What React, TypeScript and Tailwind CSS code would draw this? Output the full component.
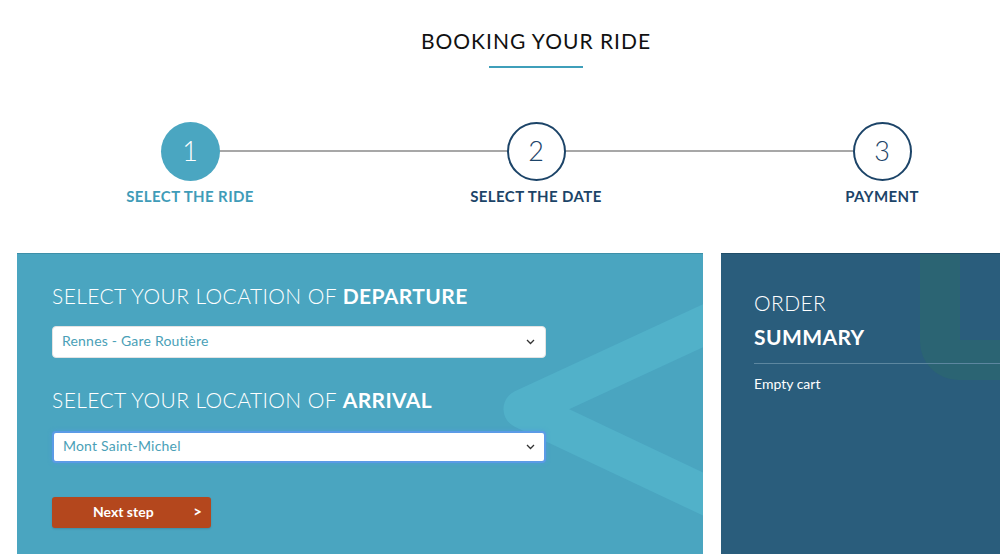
import React from "react";

const steps = [
  { n: 1, label: "SELECT THE RIDE", active: true },
  { n: 2, label: "SELECT THE DATE", active: false },
  { n: 3, label: "PAYMENT", active: false },
];

function Chevron() {
  return (
    <svg
      className="pointer-events-none absolute right-[11px] top-1/2 -translate-y-1/2"
      width="9"
      height="6"
      viewBox="0 0 9 6"
      fill="none"
    >
      <path d="M1 1l3.5 3.5L8 1" stroke="#333" strokeWidth="1.3" />
    </svg>
  );
}

function LocationSelect({ value, focused }: { value: string; focused?: boolean }) {
  return (
    <div className="relative w-[494px]">
      <select
        defaultValue={value}
        className={
          "block h-[32px] w-full appearance-none rounded-[4px] bg-white pb-[3px] pl-[9px] text-[14px] tracking-[0.2px] text-[#4a9fb7] outline-none " +
          (focused
            ? "border-2 border-[#5b9be6] pl-[8px] shadow-[0_0_4px_rgba(80,150,230,0.6)]"
            : "border border-[#e3e3e3]")
        }
      >
        <option>{value}</option>
      </select>
      <Chevron />
    </div>
  );
}

export default function App() {
  return (
    <div
      className="h-[554px] w-full overflow-hidden bg-white"
      style={{ fontFamily: "Lato, 'Open Sans', sans-serif" }}
    >
      <div className="ml-[17px] w-[1038px]">
        {/* title */}
        <div className="flex flex-col items-center pt-[29px]">
          <h1 className="text-[21px] leading-[24px] tracking-[1px] text-[#111]">
            BOOKING YOUR RIDE
          </h1>
          <div className="mt-[13px] h-[2px] w-[94px] bg-[#3f9fba]" />
        </div>

        {/* steps */}
        <div className="relative mt-[54px] grid grid-cols-3">
          <div className="absolute left-[202px] right-[202px] top-[28px] h-[2px] bg-[#a7a7a7]" />
          {steps.map((s) => (
            <div key={s.n} className="relative flex flex-col items-center">
              <div
                className={
                  "flex h-[59px] w-[59px] items-center justify-center rounded-full text-[27px] font-light " +
                  (s.active
                    ? "bg-[#4aa6c1] text-white"
                    : "border-2 border-[#1c4468] bg-white text-[#1c4468]")
                }
              >
                {s.n}
              </div>
              <div
                className={
                  "mt-[6px] text-[15px] font-bold leading-[18px] tracking-[0.4px] " +
                  (s.active ? "text-[#3f9cb8]" : "text-[#1c4468]")
                }
              >
                {s.label}
              </div>
            </div>
          ))}
        </div>

        {/* panels */}
        <div className="mt-[48px] flex gap-[18px]">
          <div className="relative h-[320px] w-[686px] overflow-hidden border-t border-[#3d8fa8] bg-[#4aa5c0] pl-[35px] pt-[30px]">
            <svg
              className="absolute left-0 top-0"
              width="686"
              height="320"
              viewBox="0 0 686 320"
              fill="none"
            >
              <path
                d="M720 56 L506 155 L720 256"
                stroke="#51b1c9"
                strokeWidth="39"
                strokeLinejoin="round"
              />
            </svg>
            <div className="relative">
              <h2 className="text-[21px] font-light leading-[24px] tracking-[0.4px] text-white">
                SELECT YOUR LOCATION OF <span className="font-bold">DEPARTURE</span>
              </h2>
              <div className="mt-[18px]">
                <LocationSelect value="Rennes - Gare Routière" />
              </div>
              <h2 className="mt-[30px] text-[21px] font-light leading-[24px] tracking-[0.4px] text-white">
                SELECT YOUR LOCATION OF <span className="font-bold">ARRIVAL</span>
              </h2>
              <div className="mt-[19px]">
                <LocationSelect value="Mont Saint-Michel" focused />
              </div>
              <button className="mt-[34px] flex h-[31px] w-[159px] items-center rounded-[3px] bg-[#b4471d] pb-[2px] pl-[41px] pr-[9px] text-[14px] font-bold text-white shadow-[0_1px_2px_rgba(0,0,0,0.15)]">
                <span>Next step</span>
                <span className="ml-auto text-[15px]">&gt;</span>
              </button>
            </div>
          </div>

          <div className="relative h-[320px] w-[334px] overflow-hidden border-t border-[#1f4d68] bg-[#2a5d7c] pt-[37px]">
            <div className="absolute left-[199px] top-[-60px] h-[186px] w-[200px] rounded-[38px] border-[40px] border-[#2b6473]" />
            <div className="relative">
              <div className="pl-[33px] text-[21px] font-light leading-[24px] tracking-[0.4px] text-white">
                ORDER
              </div>
              <div className="mt-[10px] pl-[33px] text-[21px] font-bold leading-[24px] tracking-[0.4px] text-white">
                SUMMARY
              </div>
              <div className="ml-[33px] mt-[14px] h-px bg-[#5d87a0]" />
              <div className="mt-[11px] pl-[33px] text-[14px] leading-[18px] text-white">
                Empty cart
              </div>
            </div>
          </div>
        </div>
      </div>
    </div>
  );
}
